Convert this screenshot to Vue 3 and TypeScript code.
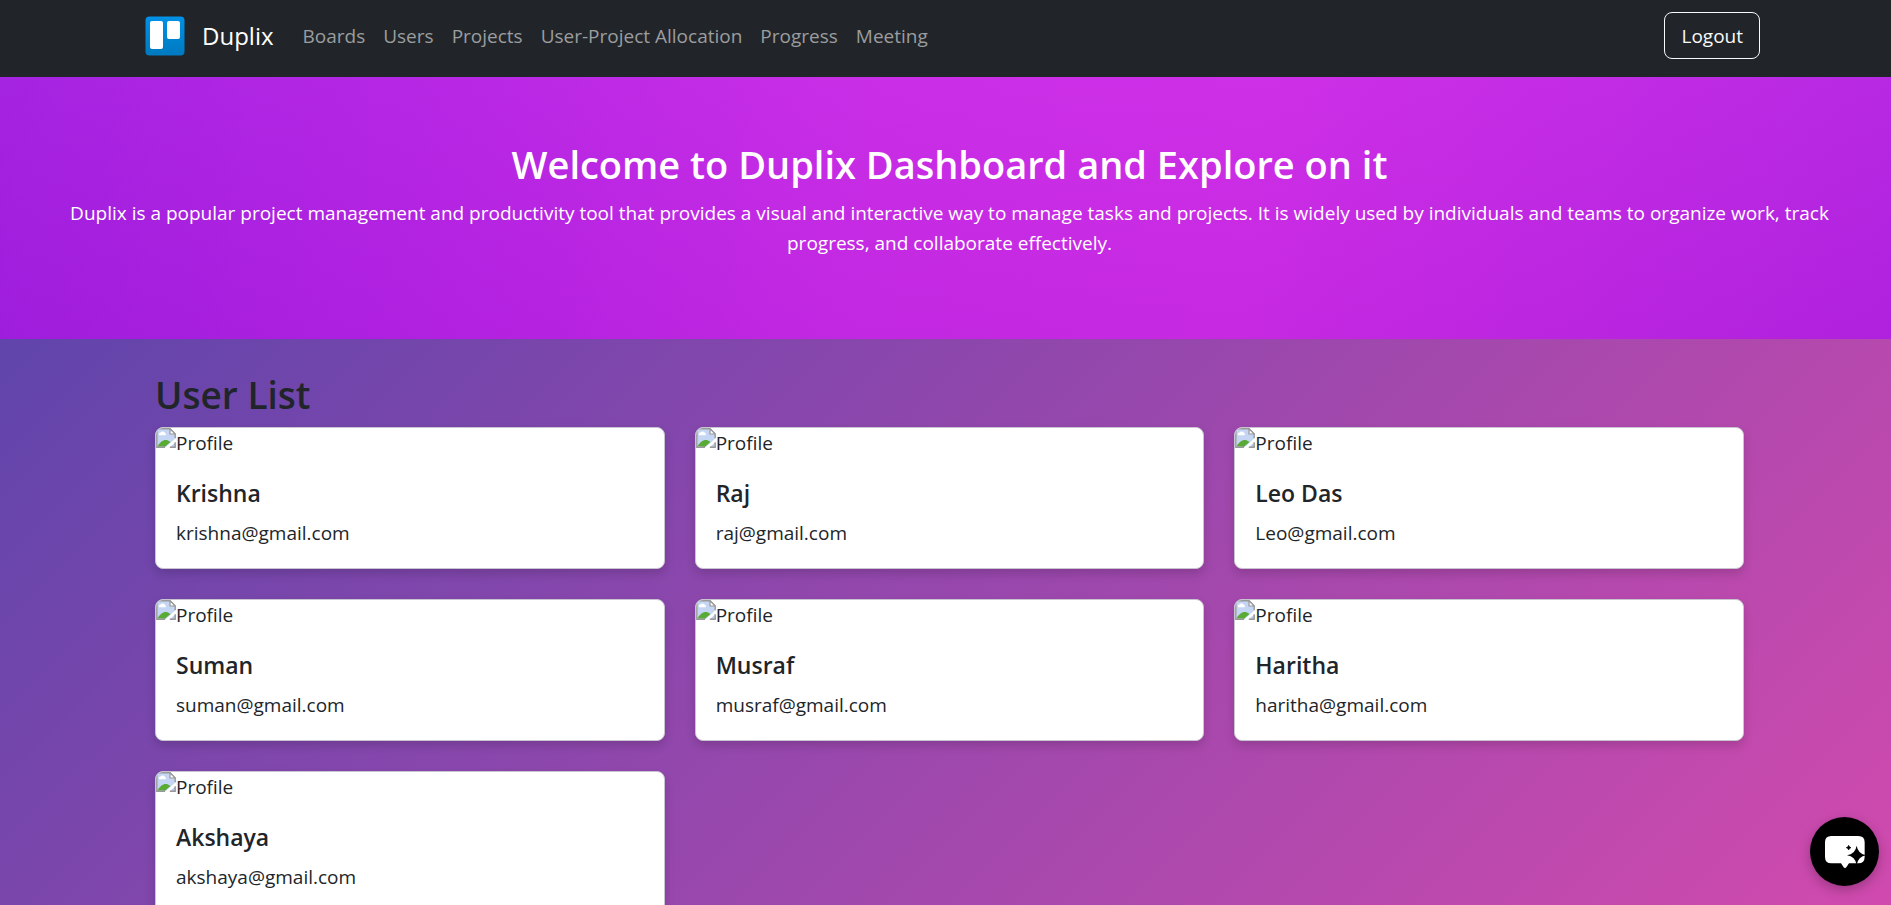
<script setup lang="ts">
interface User {
  name: string
  email: string
}

const links: string[] = ['Boards', 'Users', 'Projects', 'User-Project Allocation', 'Progress', 'Meeting']

const users: User[] = [
  { name: 'Krishna', email: 'krishna@gmail.com' },
  { name: 'Raj', email: 'raj@gmail.com' },
  { name: 'Leo Das', email: 'Leo@gmail.com' },
  { name: 'Suman', email: 'suman@gmail.com' },
  { name: 'Musraf', email: 'musraf@gmail.com' },
  { name: 'Haritha', email: 'haritha@gmail.com' },
  { name: 'Akshaya', email: 'akshaya@gmail.com' },
]
</script>

<template>
  <div class="page">
    <nav class="navbar">
      <a class="brand" href="#">
        <svg class="logo" viewBox="0 0 40 40" aria-hidden="true">
          <defs>
            <linearGradient id="logoFill" x1="0" y1="0" x2="0" y2="1">
              <stop offset="0" stop-color="#0091e6" />
              <stop offset="1" stop-color="#0079bf" />
            </linearGradient>
          </defs>
          <rect x="0.5" y="0.5" width="39" height="39" rx="4" fill="url(#logoFill)" />
          <rect x="5" y="5" width="13" height="28" rx="2" fill="#fff" />
          <rect x="22" y="5" width="13" height="18" rx="2" fill="#fff" />
        </svg>
        <span>Duplix</span>
      </a>
      <ul class="links">
        <li v-for="link in links" :key="link"><a href="#">{{ link }}</a></li>
      </ul>
      <button class="logout" type="button">Logout</button>
    </nav>

    <header class="hero">
      <h1>Welcome to Duplix Dashboard and Explore on it</h1>
      <p>
        Duplix is a popular project management and productivity tool that provides a visual and
        interactive way to manage tasks and projects. It is widely used by individuals and teams to
        organize work, track progress, and collaborate effectively.
      </p>
    </header>

    <main class="content">
      <h2>User List</h2>
      <div class="grid">
        <article v-for="user in users" :key="user.email" class="card">
          <div class="photo">
            <svg class="missing" viewBox="0 0 20 20" aria-hidden="true">
              <path d="M0.8 0.8H14L19.2 6V10.5L9.5 19.2H0.8Z" fill="#c5d6f5" />
              <path d="M3 7.2a2 2 0 0 1 1.5-2.6 2.6 2.6 0 0 1 4.6.4 1.6 1.6 0 0 1 .6 2.2Z" fill="#fff" />
              <path d="M1.5 18.5C4 13.5 8 11 11.5 12.2L14.5 14 9 18.8Z" fill="#5aab35" />
              <path d="M19.2 14.5V19.2H13.8Z" fill="#b8cbe8" />
              <path d="M9 19.2H0.8V0.8H14L19.2 6V10.2M19.2 14.2V19.2H13.8" fill="none" stroke="#999" stroke-width="1.4" />
              <path d="M14 0.8V6H19.2Z" fill="#fff" stroke="#999" stroke-width="1.2" />
            </svg>
            <span>Profile</span>
          </div>
          <div class="body">
            <h3>{{ user.name }}</h3>
            <p>{{ user.email }}</p>
          </div>
        </article>
      </div>
    </main>

    <button class="chat" type="button" aria-label="Open chat">
      <svg viewBox="0 0 207 207" aria-hidden="true">
        <path
          d="M64 57H145Q164 57 164 76V120Q164 139 145 139H117L109 151Q105 156 101 151L93 139H64Q45 139 45 120V76Q45 57 64 57Z"
          fill="#fff"
        />
        <path d="M140 86Q144 111 169 115Q144 119 140 144Q136 119 111 115Q136 111 140 86Z" fill="#000" />
        <path d="M116 85Q117 91 123 92Q117 93 116 99Q115 93 109 92Q115 91 116 85Z" fill="#000" stroke="#000" stroke-width="2" />
      </svg>
    </button>
  </div>
</template>

<style>
body {
  margin: 0;
}
</style>

<style scoped>
.page {
  display: flex;
  flex-direction: column;
  min-height: 100vh;
  font-family: 'Segoe UI', 'Open Sans', 'Noto Sans', sans-serif;
  font-size: 19px;
  line-height: 30px;
  color: #212529;
}

.page * {
  box-sizing: border-box;
}

h1,
h2,
h3,
p,
ul {
  margin: 0;
  padding: 0;
}

.navbar {
  display: flex;
  align-items: center;
  min-height: 77px;
  padding: 10px 131px 16px 145px;
  background: #212529;
}

.brand {
  display: flex;
  align-items: center;
  gap: 17px;
  margin-right: 20px;
  color: #fff;
  font-size: 24px;
  text-decoration: none;
}

.logo {
  width: 40px;
  height: 40px;
}

.links {
  display: flex;
  flex: 1;
  list-style: none;
}

.links a {
  padding: 9px;
  color: #9b9d9f;
  text-decoration: none;
  white-space: nowrap;
}

.logout {
  height: 47px;
  padding: 0 16px;
  border: 1px solid #f8f9fa;
  border-radius: 8px;
  background: transparent;
  color: #f8f9fa;
  font: inherit;
}

.hero {
  padding: 63px 60px 81px 68px;
  background:
    linear-gradient(to bottom, rgba(255, 90, 255, 0.08), rgba(160, 0, 190, 0.08)),
    linear-gradient(96deg, #9d1fde 0%, #b023e2 22%, #c52be4 46%, #c92ce4 66%, #b024e0 100%);
  color: #fff;
  text-align: center;
}

h1 {
  margin-bottom: 10px;
  font-size: 38px;
  font-weight: 600;
  line-height: 48px;
}

.content {
  flex: 1;
  padding: 32px 147px 30px 155px;
  background: linear-gradient(135deg, #6045ab, #d24aae);
}

h2 {
  margin-bottom: 8px;
  font-size: 37px;
  font-weight: 600;
  line-height: 48px;
}

.grid {
  display: grid;
  grid-template-columns: repeat(3, 1fr);
  gap: 30px;
}

.card {
  border: 1px solid #c9c5d0;
  border-radius: 8px;
  background: #fff;
  overflow: hidden;
  box-shadow: 0 5px 10px rgba(0, 0, 0, 0.15);
}

.photo {
  display: flex;
  align-items: flex-start;
}

.missing {
  width: 20px;
  height: 20px;
}

.body {
  padding: 20px;
}

h3 {
  margin-bottom: 10px;
  font-size: 23px;
  font-weight: 600;
  line-height: 30px;
}

.chat {
  position: fixed;
  right: 12px;
  bottom: 19px;
  width: 69px;
  height: 69px;
  padding: 0;
  border: 0;
  border-radius: 50%;
  background: #000;
  box-shadow: 0 4px 12px rgba(0, 0, 0, 0.25);
}

.chat svg {
  display: block;
  width: 100%;
  height: 100%;
}
</style>
